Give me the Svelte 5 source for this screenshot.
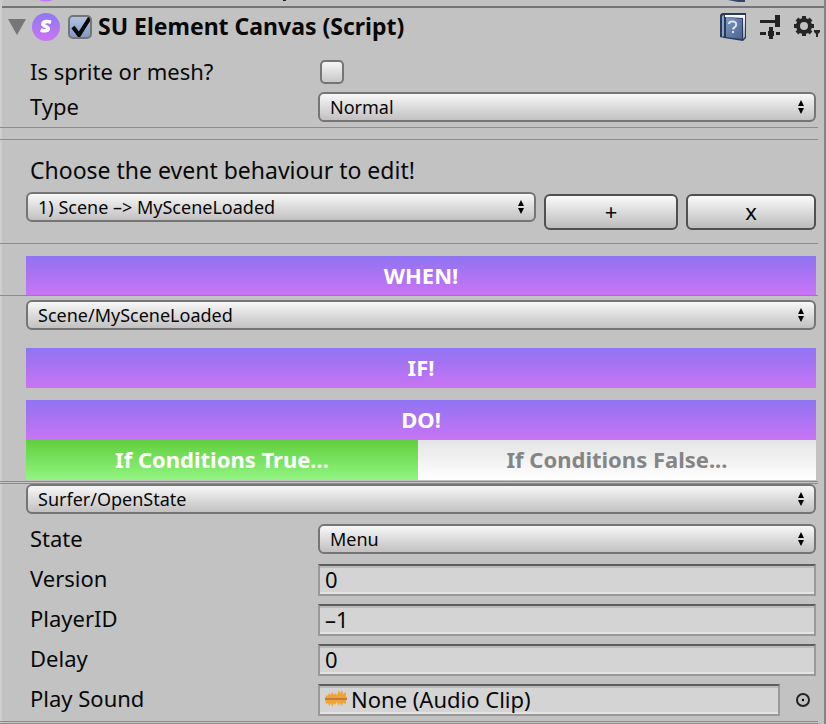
<script>
  let enabled = $state(true);
  let isMesh = $state(false);
  let open = $state(true);
  let branch = $state('true');
  let type = $state('Normal');
  let behaviour = $state('1) Scene –> MySceneLoaded');
  let trigger = $state('Scene/MySceneLoaded');
  let action = $state('Surfer/OpenState');
  let target = $state('Menu');
  let fields = $state([
    { id: 'version', label: 'Version', value: '0' },
    { id: 'player', label: 'PlayerID', value: '–1' },
    { id: 'delay', label: 'Delay', value: '0' }
  ]);
</script>

{#snippet arrows()}
  <svg class="arrows" width="6" height="14" viewBox="0 0 6 14" aria-hidden="true">
    <path d="M3 0 6 6H0zM0 8h6L3 14z" />
  </svg>
{/snippet}

<main class="inspector">
  <div class="previous" aria-hidden="true">
    <svg class="prev-logo" width="28" height="2" viewBox="0 0 28 2"><path d="M7 0h14q-7 3-14 0" fill="#c377f3" /></svg>
    <svg class="prev-paren" width="8" height="2" viewBox="0 0 8 2"><path d="M1 0h3v1H1z" fill="#222" /></svg>
    <svg class="prev-book" width="26" height="2" viewBox="0 0 26 2"><path d="M6 0h17v2h-7z" fill="#34436b" /></svg>
  </div>

  <header>
    <button class="icon fold" aria-label="Toggle component" aria-expanded={open} onclick={() => (open = !open)}>
      <svg width="18" height="16" viewBox="0 0 18 16"><path d="M0 0h18L9 16z" fill="#767676" /></svg>
    </button>
    <svg class="logo" width="28" height="28" viewBox="0 0 28 28" aria-hidden="true">
      <defs>
        <linearGradient id="logo-fill" x1="0" y1="0" x2="0" y2="1">
          <stop offset="0" stop-color="#8f77f6" />
          <stop offset="1" stop-color="#cb75f3" />
        </linearGradient>
      </defs>
      <circle cx="14" cy="14" r="14" fill="url(#logo-fill)" />
      <path d="M19 9.200C15.500 8 11.200 8.300 10.800 11c-.3 2.400 5.900 2.300 5.500 4.700-.4 2.400-4.300 2.500-7.600 1.300" fill="none" stroke="#fff" stroke-width="3.600" />
    </svg>
    <input id="enabled" class="tick" type="checkbox" bind:checked={enabled} />
    <label class="title" for="enabled">SU Element Canvas (Script)</label>
    <button class="icon" aria-label="Open reference">
      <svg width="26" height="28" viewBox="0 0 26 28">
        <defs>
          <linearGradient id="book-fill" x1="0" y1="0" x2="1" y2="1">
            <stop offset="0" stop-color="#7f98c0" />
            <stop offset="1" stop-color="#4a648f" />
          </linearGradient>
          <linearGradient id="page-fill" x1="0" y1="0" x2="0" y2="1">
            <stop offset="0" stop-color="#fff" />
            <stop offset="1" stop-color="#8fa0bb" />
          </linearGradient>
        </defs>
        <path d="M0 2 2 0h24v25l-3 3-19-3-4-1z" fill="#2a3a5c" />
        <path d="M5 2h20v22l-2 2V5L5 4z" fill="url(#page-fill)" />
        <path d="M2 3 4 2v21l-2 1z" fill="#8ea2c2" />
        <path d="M6 4 22 6v20L6 24z" fill="url(#book-fill)" />
        <path d="M9 11q0-3 4-2.500 4 .5 3 4c-.5 2-3 2-3 4M13 18v2" fill="none" stroke="#dfe6f0" stroke-width="2" />
      </svg>
    </button>
    <button class="icon" aria-label="Presets">
      <svg width="20" height="24" viewBox="0 0 20 24" fill="#222">
        <path d="M0 5h15v3H0zM15 0h5v12h-5v-4zM0 17h6v3H0zM16 17h4v3h-4zM9 12h4v4h1v5h-1v3H9v-3H8v-5h1z" />
      </svg>
    </button>
    <button class="icon" aria-label="Component menu">
      <svg width="26" height="22" viewBox="0 0 26 22">
        <circle cx="10" cy="10" r="6" fill="none" stroke="#262626" stroke-width="4" />
        <g stroke="#262626" stroke-width="4">
          <path d="M10 0v4M10 16v4M0 10h4M16 10h4M3 3l3 3M14 14l3 3M17 3l-3 3M6 14l-3 3" />
        </g>
        <path d="M20 14h6v2l-2 2v3h-2v-3l-2-2z" fill="#262626" />
      </svg>
    </button>
  </header>

  {#if open}
    <section class="general">
      <div class="row tight">
        <label for="mesh">Is sprite or mesh?</label>
        <div><input id="mesh" class="tick" type="checkbox" bind:checked={isMesh} /></div>
      </div>
      <div class="row tight">
        <label for="type">Type</label>
        <div class="select">
          <select id="type" bind:value={type}><option>Normal</option><option>Advanced</option></select>
          {@render arrows()}
        </div>
      </div>
    </section>
    <hr />
    <hr class="second" />

    <section class="events">
      <label for="behaviour">Choose the event behaviour to edit!</label>
      <div class="picker">
        <div class="select">
          <select id="behaviour" bind:value={behaviour}><option>1) Scene –> MySceneLoaded</option></select>
          {@render arrows()}
        </div>
        <button class="push add">+</button>
        <button class="push remove">x</button>
      </div>
    </section>
    <hr />

    <section class="when">
      <h2>WHEN!</h2>
    </section>
    <hr />
    <section class="block trigger">
      <div class="select">
        <select aria-label="When" bind:value={trigger}><option>Scene/MySceneLoaded</option></select>
        {@render arrows()}
      </div>
    </section>

    <section class="block">
      <h2 class="spaced">IF!</h2>
      <h2>DO!</h2>
      <div class="tabs">
        <button class="yes" aria-pressed={branch === 'true'} onclick={() => (branch = 'true')}>If Conditions True...</button>
        <button class="no" aria-pressed={branch === 'false'} onclick={() => (branch = 'false')}>If Conditions False...</button>
      </div>
    </section>
    <div class="rules"><hr /><hr /></div>

    <section class="block">
      <div class="select">
        <select aria-label="Do" bind:value={action}><option>Surfer/OpenState</option></select>
        {@render arrows()}
      </div>
    </section>
    <section class="values">
      <div class="row">
        <label for="state">State</label>
        <div class="select">
          <select id="state" bind:value={target}><option>Menu</option></select>
          {@render arrows()}
        </div>
      </div>
      {#each fields as field (field.id)}
        <div class="row">
          <label for={field.id}>{field.label}</label>
          <input id={field.id} class="field" type="text" bind:value={field.value} />
        </div>
      {/each}
      <div class="row">
        <label for="sound">Play Sound</label>
        <div class="object">
          <button id="sound" class="field clip">
            <svg width="22" height="18" viewBox="0 0 22 18" aria-hidden="true">
              <path d="M0 9 1 5l2 1 1-3 2 2 1-3 2 3 1-2 2 2 2-5 1 3 2-3 1 4 3-2v4l1 2-1 3v3l-3-1-1 3-2-3-1 3-2-4-2 3-1-2-2 4-1-4-2 3-1-3-2 1z" fill="#f3a335" />
              <path d="M0 9h22" stroke="#b98040" stroke-width="2" />
            </svg>
            <span>None (Audio Clip)</span>
          </button>
          <button class="icon" aria-label="Select audio clip">
            <svg width="14" height="14" viewBox="0 0 14 14">
              <circle cx="7" cy="7" r="6" fill="none" stroke="#222" stroke-width="2" />
              <circle cx="7" cy="7" r="1.200" />
            </svg>
          </button>
        </div>
      </div>
    </section>
    <div class="rules"><hr /><hr /></div>
  {/if}
</main>

<style>
  :global(body) {
    background: #c2c2c2;
  }
  .inspector {
    box-sizing: border-box;
    min-height: 100vh;
    border-left: 2px solid #cecece;
    border-right: 2px solid #858585;
    font: 22px/28px 'Noto Sans', 'Open Sans', sans-serif;
    color: #080808;
  }
  .inspector * {
    box-sizing: border-box;
  }
  button,
  input,
  select {
    margin: 0;
    font: inherit;
    color: inherit;
  }
  .previous {
    display: flex;
    align-items: flex-start;
    height: 8px;
    padding: 0 76px 0 30px;
    border-bottom: 2px solid #757575;
  }
  .prev-paren {
    margin-left: 222px;
  }
  .prev-book {
    margin-left: auto;
  }
  header {
    display: flex;
    align-items: center;
    height: 38px;
    padding: 0 4px 0 6px;
  }
  .icon {
    display: flex;
    flex: none;
    padding: 0;
    border: 0;
    background: none;
  }
  .logo {
    flex: none;
    margin: 0 8px 0 6px;
  }
  .title {
    flex: 1;
    margin-left: 6px;
    padding-bottom: 2px;
    font-size: 23px;
    font-weight: 700;
    white-space: nowrap;
  }
  header .icon + .icon {
    margin-left: 14px;
  }
  .tick {
    display: block;
    flex: none;
    width: 24px;
    height: 24px;
    appearance: none;
    border: 2px solid #757575;
    border-radius: 5px;
    background: linear-gradient(#f6f6f6, #c9c7c8);
  }
  .tick:checked {
    background:
      url("data:image/svg+xml,%3Csvg xmlns='http://www.w3.org/2000/svg' viewBox='0 0 24 24'%3E%3Cpath d='M5 12l6 8L23 1' fill='none' stroke='%23080808' stroke-width='4'/%3E%3C/svg%3E") center / 24px 24px border-box,
      linear-gradient(#b5c7e2, #7c95c4) border-box;
  }
  .general {
    padding: 11px 8px 5px 28px;
  }
  .row {
    display: grid;
    grid-template-columns: 288px 1fr;
    align-items: start;
    min-height: 32px;
  }
  .tight {
    min-height: 30px;
  }
  .tight + .tight {
    margin-top: 5px;
  }
  .tight .tick {
    margin: 3px 2px 0;
  }
  hr {
    height: 1px;
    margin: 0 6px 0 -2px;
    border: 0;
    background: #8c8c8c;
  }
  .second {
    margin-top: 11px;
  }
  .select {
    position: relative;
    min-width: 0;
  }
  select {
    display: block;
    width: 100%;
    height: 30px;
    padding: 0 28px 0 10px;
    appearance: none;
    border: 2px solid #757575;
    border-radius: 6px;
    background: linear-gradient(#f8f8f8, #c2c0c1);
    font-size: 18px;
    line-height: 24px;
  }
  .arrows {
    position: absolute;
    top: 8px;
    right: 12px;
    pointer-events: none;
  }
  .events {
    padding: 16px 8px 13px 24px;
  }
  .events > label {
    display: block;
    margin-left: 4px;
    font-size: 23px;
  }
  .picker {
    display: flex;
    align-items: flex-start;
    gap: 8px;
    margin-top: 8px;
  }
  .picker .select {
    flex: 1;
  }
  .push {
    width: 130px;
    height: 36px;
    margin-top: 2px;
    padding: 0 0 2px;
    border: 2px solid #505050;
    border-radius: 6px;
    background: linear-gradient(#fafafa, #bcbcbc);
  }
  .add {
    width: 134px;
  }
  .when {
    padding: 12px 8px 0 24px;
  }
  .block {
    padding: 0 8px 0 24px;
  }
  .trigger {
    padding-top: 4px;
    padding-bottom: 18px;
  }
  h2 {
    height: 40px;
    margin: 0;
    background: linear-gradient(#8f75f5, #a073f2 30%, #c975f4);
    color: #fff;
    font-size: 22px;
    line-height: 38px;
    text-align: center;
  }
  .spaced {
    margin-bottom: 12px;
  }
  .when h2 {
    height: 39px;
  }
  .tabs {
    display: grid;
    grid-template-columns: 392fr 398fr;
  }
  .tabs button {
    height: 40px;
    padding: 0 0 2px;
    border: 0;
    font-weight: 700;
    line-height: 38px;
  }
  .yes {
    background: linear-gradient(#60cf3d, #92f582);
    color: #fff;
  }
  .no {
    background: linear-gradient(#e4e4e4, #fff);
    color: #858585;
  }
  .rules {
    display: grid;
    gap: 1px;
    padding-top: 1px;
  }
  .values {
    display: grid;
    gap: 8px;
    padding: 10px 8px 4px 28px;
  }
  .field {
    width: 100%;
    height: 32px;
    padding: 0 5px 2px;
    border: 2px solid #999;
    border-top-color: #5e5e5e;
    border-radius: 0;
    background: #d4d4d4;
    box-shadow:
      inset 0 2px #bdbdbd,
      inset 0 -2px #e3e3e3;
  }
  .object {
    display: flex;
    align-items: center;
    gap: 16px;
    padding-right: 6px;
  }
  .clip {
    display: flex;
    align-items: center;
    gap: 4px;
    text-align: left;
  }
</style>
